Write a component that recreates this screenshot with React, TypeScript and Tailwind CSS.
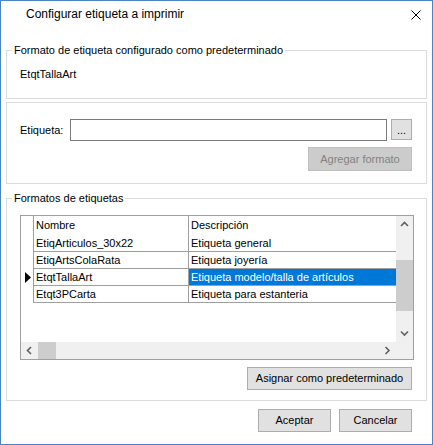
const rows = [
  { name: "EtiqArticulos_30x22", desc: "Etiqueta general" },
  { name: "EtiqArtsColaRata", desc: "Etiqueta joyería" },
  { name: "EtqtTallaArt", desc: "Etiqueta modelo/talla de artículos", current: true },
  { name: "Etqt3PCarta", desc: "Etiqueta para estanteria" },
];

function Chevron({ dir }: { dir: "up" | "down" | "left" | "right" }) {
  const d = {
    up: "M1 5 L4.5 1.5 L8 5",
    down: "M1 1.5 L4.5 5 L8 1.5",
    left: "M5 1 L1.5 4.5 L5 8",
    right: "M1.5 1 L5 4.5 L1.5 8",
  }[dir];
  const vertical = dir === "up" || dir === "down";
  return (
    <svg width={vertical ? 9 : 7} height={vertical ? 7 : 9} viewBox={vertical ? "0 0 9 7" : "0 0 7 9"}>
      <path d={d} fill="none" stroke="#606060" strokeWidth="1.6" />
    </svg>
  );
}

function Button({ label, className, disabled }: { label: string; className: string; disabled?: boolean }) {
  return (
    <div
      className={
        "flex items-center justify-center border " +
        (disabled ? "bg-[#cccccc] border-[#bfbfbf] text-[#838383] " : "bg-[#e1e1e1] border-[#adadad] text-black ") +
        className
      }
    >
      {label}
    </div>
  );
}

export default function App() {
  return (
    <div className="w-[433px] h-[445px] border border-[#4a84c2] bg-white flex flex-col text-[11px] leading-[13px] text-black font-['Liberation_Sans',Arial,sans-serif]">
      {/* title bar */}
      <div className="h-[27px] flex items-center pl-[25px] pr-[11px]">
        <span className="text-[12px]">Configurar etiqueta a imprimir</span>
        <svg className="ml-auto" width="10" height="10" viewBox="0 0 10 10">
          <path d="M0.5 0.5 L9.5 9.5 M9.5 0.5 L0.5 9.5" stroke="#000" strokeWidth="1" />
        </svg>
      </div>

      <div className="flex-1 flex flex-col px-[5px]">
        {/* default format */}
        <div className="relative mt-[22px] h-[49px] border border-[#dcdcdc] pt-[17px] pl-[13px]">
          <span className="absolute top-[-7px] left-[5px] bg-white px-[2px]">
            Formato de etiqueta configurado como predeterminado
          </span>
          EtqtTallaArt
        </div>

        {/* add format */}
        <div className="mt-[3px] h-[82px] border border-[#dcdcdc] pt-[16px] pl-[13px] pr-[14px] flex flex-col">
          <div className="flex items-start">
            <div className="w-[50px] h-[22px] flex items-center">Etiqueta:</div>
            <div className="w-[317px] h-[22px] border border-[#7a7a7a] bg-white" />
            <Button label="..." className="ml-[4px] w-[21px] h-[21px] pt-[2px]" />
          </div>
          <Button label="Agregar formato" disabled className="self-end mt-[6px] w-[104px] h-[24px]" />
        </div>

        {/* formats list */}
        <div className="relative mt-[14px] h-[203px] border border-[#dcdcdc] pt-[16px] pl-[13px] pr-[14px] flex flex-col">
          <span className="absolute top-[-7px] left-[5px] bg-white px-[2px]">Formatos de etiquetas</span>

          <div className="w-[394px] h-[145px] border border-[#a0a0a0] flex flex-col">
            <div className="h-[126px] flex">
              <div className="flex-1 flex flex-col">
                <div className="h-[19px] flex">
                  <div className="w-[13px] border-r border-[#a0a0a0]" />
                  <div className="w-[155px] border-r border-[#a0a0a0] flex items-center pl-[2px]">Nombre</div>
                  <div className="flex-1 flex items-center pl-[2px]">Descripción</div>
                </div>
                {rows.map((r) => (
                  <div key={r.name} className="h-[17px] flex">
                    <div className="w-[13px] border-r border-[#a0a0a0] flex items-center pl-[4px]">
                      {r.current && (
                        <svg width="6" height="11" viewBox="0 0 6 11">
                          <path d="M0 0 L6 5.5 L0 11 Z" fill="#000" />
                        </svg>
                      )}
                    </div>
                    <div className="w-[155px] border-r border-b border-[#a0a0a0] bg-white flex items-center pl-[2px]">
                      {r.name}
                    </div>
                    <div
                      className={
                        "flex-1 border-b border-[#a0a0a0] flex items-center pl-[2px] " +
                        (r.current ? "bg-[#0078d7] text-white" : "bg-white")
                      }
                    >
                      {r.desc}
                    </div>
                  </div>
                ))}
              </div>
              {/* vertical scrollbar */}
              <div className="w-[17px] bg-[#f0f0f0] flex flex-col items-center">
                <div className="h-[17px] flex items-center justify-center">
                  <Chevron dir="up" />
                </div>
                <div className="mt-[27px] h-[51px] w-full bg-[#cdcdcd]" />
                <div className="mt-auto h-[17px] flex items-center justify-center">
                  <Chevron dir="down" />
                </div>
              </div>
            </div>
            {/* horizontal scrollbar */}
            <div className="h-[17px] bg-[#f0f0f0] flex">
              <div className="w-[17px] flex items-center justify-center">
                <Chevron dir="left" />
              </div>
              <div className="w-[18px] bg-[#cdcdcd]" />
              <div className="ml-auto mr-[17px] w-[17px] flex items-center justify-center">
                <Chevron dir="right" />
              </div>
            </div>
          </div>

          <Button label="Asignar como predeterminado" className="self-end mt-[7px] w-[165px] h-[23px]" />
        </div>

        {/* dialog buttons */}
        <div className="mt-[8px] flex justify-end gap-[8px] pr-[15px]">
          <Button label="Aceptar" className="w-[73px] h-[23px]" />
          <Button label="Cancelar" className="w-[73px] h-[23px]" />
        </div>
      </div>
    </div>
  );
}
